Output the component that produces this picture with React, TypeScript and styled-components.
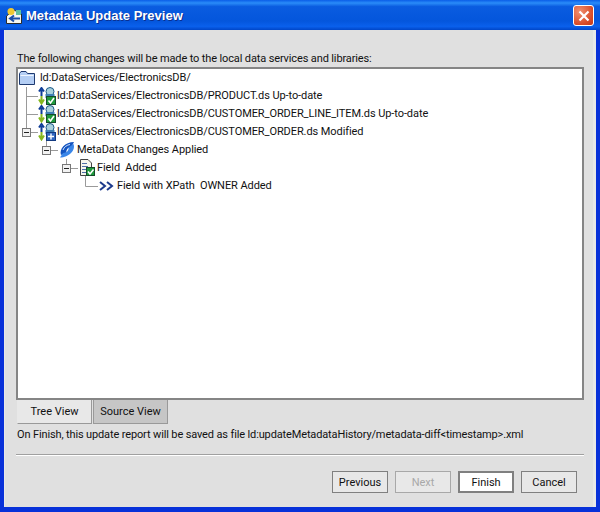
import styled, { createGlobalStyle } from 'styled-components'
import { ReactNode } from 'react'

const Global = createGlobalStyle`
  html, body { margin: 0; padding: 0; background: #e0e0e0; }
  * { box-sizing: border-box; }
`

function TitleIcon() {
  return (
    <svg width="18" height="18" viewBox="0 0 18 18">
      <path d="M1.5 9 L9 3 L16.5 7 V16.5 H1.5 Z" fill="#f6f6f0" stroke="#2a2a2a" />
      <path d="M11 3 H16 V8 H11 Z" fill="#60c0a0" />
      <circle cx="6" cy="4.5" r="3.5" fill="#f0c830" />
      <path d="M15 11.5 H6 M9 8.5 L5 11.5 L9 14.5" fill="none" stroke="#1c4fa8" strokeWidth="2" />
    </svg>
  )
}

function CloseIcon() {
  return (
    <svg width="12" height="12" viewBox="0 0 12 12">
      <path d="M1.5 1.5 L10.5 10.5 M10.5 1.5 L1.5 10.5" stroke="#fff" strokeWidth="2.2" />
    </svg>
  )
}

function Expander({ x, y }: { x: number, y: number }) {
  return (
    <g>
      <rect x={x + 0.5} y={y + 0.5} width="8" height="8" fill="#f2f2f2" stroke="#777" />
      <path d={`M${x + 2} ${y + 4.5} H${x + 7}`} stroke="#222" />
    </g>
  )
}

function Folder({ x }: { x: number }) {
  return (
    <g>
      <path d={`M${x + 0.5} 4.5 L${x + 2} 2.5 H${x + 7} L${x + 8.5} 4.5 H${x + 15.5} V15.5 H${x + 0.5} Z`} fill="#b4cef4" stroke="#1e3a70" />
      <path d={`M${x + 1.5} 6.5 H${x + 14.5}`} stroke="#f0f6ff" />
    </g>
  )
}

function ServiceIcon({ x, modified }: { x: number, modified?: boolean }) {
  return (
    <g>
      <path d={`M${x + 3.5} 9 V3 M${x + 1} 4.5 L${x + 3.5} 1 L${x + 6} 4.5`} fill="none" stroke="#103e98" strokeWidth="2" />
      <path d={`M${x + 3.5} 9 V15 M${x + 1} 12.5 L${x + 3.5} 16.5 L${x + 6} 12.5`} fill="none" stroke="#86b820" strokeWidth="2" />
      <circle cx={x + 12} cy="4.5" r="4" fill="#a8d0dc" stroke="#1c5a88" />
      <path d={`M${x + 7.5} 7 H${x + 16.5} V11 H${x + 7.5} Z`} fill="#3f7fb4" />
      <rect x={x + 8.5} y="9.5" width="9" height="8" fill={modified ? '#2f66c0' : '#1f9a3c'} stroke={modified ? '#123a80' : '#154a2a'} />
      {modified
        ? <path d={`M${x + 13} 10.5 V16.5 M${x + 10} 13.5 H${x + 16}`} stroke="#fff" strokeWidth="1.4" />
        : <path d={`M${x + 10.5} 13.5 L${x + 12.5} 16 L${x + 16} 11`} fill="none" stroke="#fff" strokeWidth="1.6" />}
    </g>
  )
}

function ChangesIcon({ x }: { x: number }) {
  return (
    <g>
      <path d={`M${x + 2} 14 C${x} 8 ${x + 6} 1 ${x + 15} 1 L${x + 12.5} 6 C${x + 9} 6 ${x + 7} 9 ${x + 7.5} 11.5 Z`} fill="#1454c0" />
      <path d={`M${x + 14.5} 3 C${x + 17} 9 ${x + 10} 16.5 ${x + 1} 16.5 L${x + 4} 12 C${x + 8} 12 ${x + 10} 9 ${x + 9.5} 6.5 Z`} fill="#3a86e8" />
      <path d={`M${x + 4} 9 C${x + 5} 6 ${x + 8} 4 ${x + 11} 3.5`} fill="none" stroke="#d0e4ff" />
    </g>
  )
}

function FieldIcon({ x }: { x: number }) {
  return (
    <g>
      <path d={`M${x + 1.5} 0.5 H${x + 9} L${x + 12.5} 4 V16.5 H${x + 1.5} Z`} fill="#f6f6ee" stroke="#444" />
      <path d={`M${x + 3} 4.5 H${x + 8} M${x + 3} 7.5 H${x + 9} M${x + 3} 10.5 H${x + 7} M${x + 3} 13.5 H${x + 7}`} stroke="#5070a8" />
      <rect x={x + 7.5} y="8.5" width="8" height="8" fill="#1f9a3c" stroke="#154a2a" />
      <path d={`M${x + 9} 12.5 L${x + 11} 15 L${x + 14.5} 10.5`} fill="none" stroke="#fff" strokeWidth="1.6" />
    </g>
  )
}

function Line({ d }: { d: string }) {
  return <path d={d} fill="none" stroke="#9a9a9a" />
}

interface RowDef {
  width: number,
  label: string,
  art: ReactNode
}

const rows: RowDef[] = [
  { width: 22, label: 'ld:DataServices/ElectronicsDB/', art: <Folder x={1} /> },
  {
    width: 39,
    label: 'ld:DataServices/ElectronicsDB/PRODUCT.ds Up-to-date',
    art: <><Line d="M8.5 0 V18 M8.5 9.5 H20" /><ServiceIcon x={20} /></>
  },
  {
    width: 39,
    label: 'ld:DataServices/ElectronicsDB/CUSTOMER_ORDER_LINE_ITEM.ds Up-to-date',
    art: <><Line d="M8.5 0 V18 M8.5 9.5 H20" /><ServiceIcon x={20} /></>
  },
  {
    width: 39,
    label: 'ld:DataServices/ElectronicsDB/CUSTOMER_ORDER.ds Modified',
    art: <><Line d="M8.5 0 V5 M13 9.5 H20 M28.5 16 V18" /><Expander x={4} y={5} /><ServiceIcon x={20} modified /></>
  },
  {
    width: 59,
    label: 'MetaData Changes Applied',
    art: <><Line d="M28.5 0 V5 M33 9.5 H40" /><Expander x={24} y={5} /><ChangesIcon x={41} /></>
  },
  {
    width: 79,
    label: 'Field  Added',
    art: <><Line d="M48.5 0 V5 M53 9.5 H60 M67.5 16 V18" /><Expander x={44} y={5} /><FieldIcon x={61} /></>
  },
  {
    width: 99,
    label: 'Field with XPath  OWNER Added',
    art: <>
      <Line d="M67.5 0 V9.5 H80" />
      <path d="M82 5 L87 9 L82 13 M89 5 L94 9 L89 13" fill="none" stroke="#1c3a8c" strokeWidth="2" />
    </>
  }
]

export default function App() {
  return (
    <Frame>
      <Global />
      <TitleBar>
        <TitleIcon />
        <Title>Metadata Update Preview</Title>
        <CloseButton><CloseIcon /></CloseButton>
      </TitleBar>
      <Body>
        <Intro>The following changes will be made to the local data services and libraries:</Intro>
        <Tree>
          {rows.map(row => (
            <TreeRow key={row.label}>
              <svg width={row.width} height="18" viewBox={`0 0 ${row.width} 18`}>{row.art}</svg>
              <RowLabel>{row.label}</RowLabel>
            </TreeRow>
          ))}
        </Tree>
        <Tabs>
          <Tab $active>Tree View</Tab>
          <Tab>Source View</Tab>
        </Tabs>
        <Note>On Finish, this update report will be saved as file ld:updateMetadataHistory/metadata-diff&lt;timestamp&gt;.xml</Note>
        <Separator />
        <Buttons>
          <Button>Previous</Button>
          <Button $disabled>Next</Button>
          <Button $primary>Finish</Button>
          <Button>Cancel</Button>
        </Buttons>
      </Body>
    </Frame>
  )
}

const Frame = styled.div`
  width: 600px;
  height: 512px;
  display: flex;
  flex-direction: column;
  overflow: hidden;
  background: #0831d9;
  font-family: Roboto, "Liberation Sans", sans-serif;
  font-size: 11px;
  color: #111;
`
const TitleBar = styled.div`
  height: 30px;
  flex-shrink: 0;
  padding: 1px 6px 0 5px;
  display: flex;
  align-items: center;
  gap: 3px;
  background: linear-gradient(180deg, #0a5ee8 0%, #2a8cf8 10%, #0a5ce0 22%, #0456dc 70%, #0a60ec 88%, #0046c8 100%);
`
const Title = styled.div`
  flex: 1;
  font-family: "Liberation Sans", Arial, sans-serif;
  font-weight: 700;
  font-size: 13px;
  color: #fff;
  text-shadow: 1px 1px 0 #0a2f90;
`
const CloseButton = styled.div`
  width: 21px;
  height: 21px;
  border: 1px solid #fff;
  border-radius: 3px;
  display: flex;
  align-items: center;
  justify-content: center;
  background: radial-gradient(circle at 30% 30%, #f09070, #d84a26 70%, #c03a18);
`
const Body = styled.div`
  flex: 1;
  display: flex;
  flex-direction: column;
  margin: 0 4px 5px;
  padding: 21px 12px 0;
  background: #e0e0e0;
  border-left: 1px solid #e8e8e8;
  border-right: 3px solid #e8e8e8;
`
const Intro = styled.div`
  height: 16px;
  line-height: 16px;
  letter-spacing: -0.13px;
`
const Tree = styled.div`
  height: 333px;
  margin: 0 -3px 0 -1px;
  background: #fff;
  border: 2px solid #858585;
`
const TreeRow = styled.div`
  height: 18px;
  display: flex;
  align-items: center;
`
const RowLabel = styled.span`
  white-space: pre;
  line-height: 18px;
  letter-spacing: -0.08px;
`
const Tabs = styled.div`
  display: flex;
  height: 24px;
  gap: 1px;
`
const Tab = styled.div<{ $active?: boolean }>`
  width: 75px;
  display: flex;
  align-items: center;
  justify-content: center;
  background: ${p => p.$active ? '#e8e8e8' : '#c6c6c6'};
  border: 1px solid #999;
  border-top: none;
  border-left-color: ${p => p.$active ? '#e8e8e8' : '#999'};
`
const Note = styled.div`
  height: 22px;
  line-height: 22px;
  white-space: pre;
  letter-spacing: -0.135px;
`
const Separator = styled.div`
  height: 2px;
  margin: 8px -3px 0 -1px;
  background: linear-gradient(180deg, #a0a0a0 50%, #fff 50%);
`
const Buttons = styled.div`
  display: flex;
  justify-content: flex-end;
  gap: 7px;
  margin: 15px 4px 0 0;
`
const Button = styled.div<{ $primary?: boolean, $disabled?: boolean }>`
  width: 56px;
  height: 22px;
  display: flex;
  align-items: center;
  justify-content: center;
  background: ${p => p.$primary ? '#fff' : '#e8e8e8'};
  border: ${p => p.$primary ? '2px solid #808080' : p.$disabled ? '1px solid #a8a8a8' : '1px solid #808080'};
  color: ${p => p.$disabled ? '#a8a8a8' : '#111'};
`
